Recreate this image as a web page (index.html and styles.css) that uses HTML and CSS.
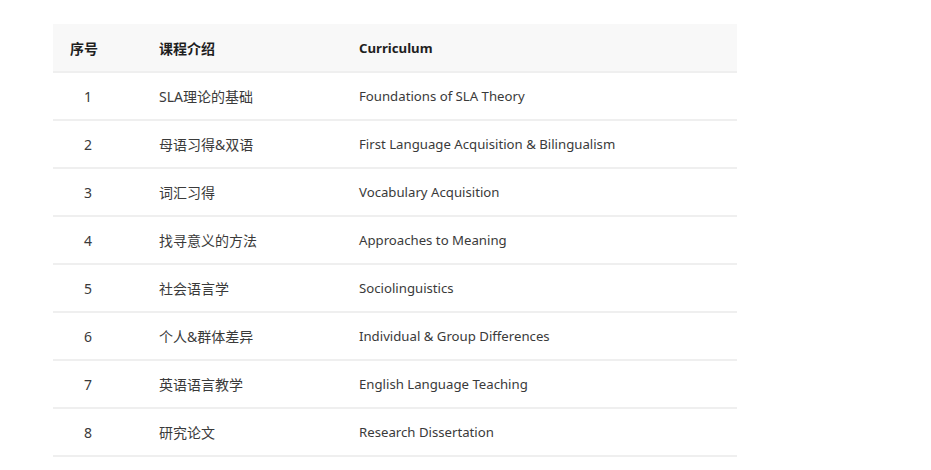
FILE: index.html
```html
<!DOCTYPE html>
<html lang="zh">
<head>
<meta charset="utf-8">
<link rel="stylesheet" href="styles.css">
</head>
<body>
<div class="wrap">
<table class="course">
  <thead>
    <tr><th class="c1">序号</th><th class="c2">课程介绍</th><th class="c3">Curriculum</th></tr>
  </thead>
  <tbody>
    <tr><td class="c1">1</td><td class="c2">SLA理论的基础</td><td class="c3">Foundations of SLA Theory</td></tr>
    <tr><td class="c1">2</td><td class="c2">母语习得&amp;双语</td><td class="c3">First Language Acquisition &amp; Bilingualism</td></tr>
    <tr><td class="c1">3</td><td class="c2">词汇习得</td><td class="c3">Vocabulary Acquisition</td></tr>
    <tr><td class="c1">4</td><td class="c2">找寻意义的方法</td><td class="c3">Approaches to Meaning</td></tr>
    <tr><td class="c1">5</td><td class="c2">社会语言学</td><td class="c3">Sociolinguistics</td></tr>
    <tr><td class="c1">6</td><td class="c2">个人&amp;群体差异</td><td class="c3">Individual &amp; Group Differences</td></tr>
    <tr><td class="c1">7</td><td class="c2">英语语言教学</td><td class="c3">English Language Teaching</td></tr>
    <tr><td class="c1">8</td><td class="c2">研究论文</td><td class="c3">Research Dissertation</td></tr>
  </tbody>
</table>
</div>
</body>
</html>
```
FILE: styles.css
```css
html, body {
  margin: 0;
  padding: 0;
  background: #ffffff;
}
body {
  font-family: "Noto Sans", "Noto Sans CJK SC", sans-serif;
  font-size: 14px;
  color: #333333;
}
.wrap {
  padding: 24px 0 0 53px;
}
.course {
  width: 684px;
  border-collapse: collapse;
  table-layout: fixed;
}
.course th, .course td {
  box-sizing: border-box;
  height: 48px;
  padding: 0;
  border-bottom: 2px solid #efefef;
  vertical-align: middle;
  text-align: left;
}
.course thead th {
  height: 48px;
  background: #f8f8f8;
  font-weight: bold;
  color: #1f1f1f;
}
.course th.c1 { padding-left: 17px; }
.course td.c1 { text-align: center; }
.c1 { width: 70px; }
.c2 { width: 200px; padding-left: 36px !important; }
.c3 { padding-left: 36px !important; font-size: 13.2px; }
.course td { color: #3a3a3a; }
```
